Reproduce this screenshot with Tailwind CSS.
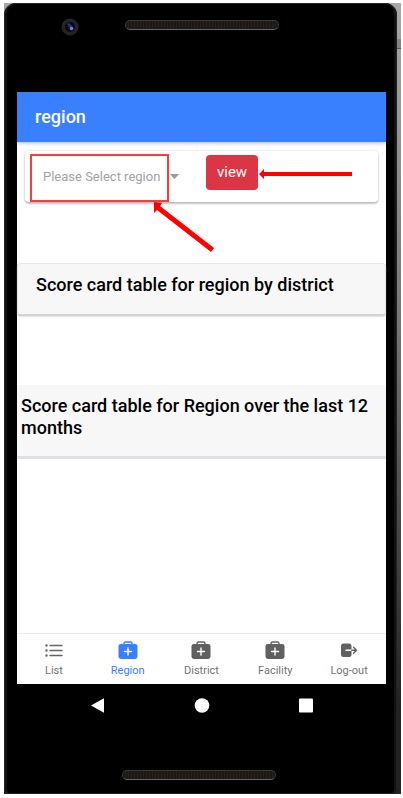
<!DOCTYPE html>
<html lang="en">
<head>
<meta charset="utf-8">
<meta name="viewport" content="width=device-width, initial-scale=1">
<title>region</title>
<script src="https://cdn.jsdelivr.net/npm/@tailwindcss/browser@4"></script>
</head>
<body class="flex min-h-screen flex-col bg-white pt-[3px] pr-0.5 pb-1 pl-1 font-['Roboto',sans-serif] text-black">
<div class="flex grow bg-linear-to-b from-[#a8a8a8] via-[#777] via-40% to-[#222] to-90%">
<div class="flex grow flex-col rounded-t-[12px] rounded-b-[6px] border-x-[3px] border-[#111] bg-black pr-2 pl-2.5 outline-1 -outline-offset-1 outline-[#222]">
  <div class="relative flex h-[89px] shrink-0 justify-center pt-[17px]">
    <svg class="absolute top-[15px] left-11" width="18" height="18" viewBox="0 0 18 18" aria-hidden="true">
      <circle cx="9" cy="9" r="8.5" fill="#242424"/><circle cx="9" cy="9" r="5" fill="#080814"/>
      <path d="M6 6l2-1 4 4-1 2-3-2z" fill="#243581"/><circle cx="10.5" cy="10.5" r="1.8" fill="#6b84e8"/>
    </svg>
    <div class="h-2.5 w-[154px] rounded-full border border-[#3a3a38] border-b-[#666] bg-[repeating-linear-gradient(90deg,#1c1814_0_2px,#26211c_2px_3px)]"></div>
  </div>

  <div class="relative flex grow flex-col bg-white">
    <header class="z-10 flex h-[50px] shrink-0 items-center bg-[#3880ff] px-[18px] shadow-[0_1px_4px_rgba(0,0,0,0.3)]">
      <h1 class="text-lg font-medium text-white">region</h1>
    </header>

    <main class="flex grow flex-col">
      <form class="relative mx-2 mt-[9px] flex h-[51px] items-start rounded bg-white pt-1 pl-[18px] shadow-[0_2px_2px_rgba(0,0,0,0.22),0_0_3px_rgba(0,0,0,0.16)]">
        <div class="relative mt-1 w-[136px]">
          <select id="region" aria-label="Region" class="h-9 w-full appearance-none bg-transparent text-[13px] text-[#a3a3a3]">
            <option>Please Select region</option>
          </select>
          <svg class="pointer-events-none absolute top-[15px] right-0" width="9" height="5" viewBox="0 0 9 5" fill="#999" aria-hidden="true"><path d="M0 0h9L4.500 5z"/></svg>
        </div>
        <button type="button" class="ml-[27px] h-[35px] rounded bg-[#dc3545] px-[11px] text-[15px] text-white">view</button>
        <div class="pointer-events-none absolute top-[3px] left-[5px] h-12 w-[139px] border-2 border-[#fa3c3c]"></div>
        <svg class="pointer-events-none absolute top-0 left-0 overflow-visible" width="353" height="100" viewBox="25 151 353 100" fill="#f00" aria-hidden="true">
          <path d="M259 174l5-5v3h88v4h-88v3z"/>
          <path d="M154 202l8 1-2 3 54 42-3 4-54-42-3 3z"/>
        </svg>
      </form>

      <section class="mt-[61px] h-[53px] rounded-sm border border-[#e6e6e6] border-b-2 border-b-[#d2d4d6] bg-[#f7f7f7] px-[18px] pt-2.5 shadow-[0_1px_1px_#dee2e6]">
        <h2 class="text-lg leading-[22px] font-medium">Score card table for region by district</h2>
      </section>

      <section class="mt-[69px] h-[74px] border-b-3 border-[#dee2e6] bg-[#f7f7f7] px-1 pt-2.5">
        <h2 class="text-lg leading-[22px] font-medium">Score card table for Region over the last 12 months</h2>
      </section>
    </main>

    <nav class="grid h-[51px] shrink-0 grid-cols-5 border-t border-[#ececec] bg-white text-[11px] leading-[14px] text-[#737373]">
      <a href="#list" class="flex flex-col items-center gap-[3px] pt-[7px]">
        <svg width="20" height="20" viewBox="0 0 20 20" fill="none" stroke="#666" aria-hidden="true"><path d="M6 4.500h12M6 9.500h12M6 14.500h12" stroke-width="1.400" stroke-linecap="round"/><path d="M2.500 4.500h.01M2.500 9.500h.01M2.500 14.500h.01" stroke-width="2.400" stroke-linecap="round"/></svg>
        List
      </a>
      <a href="#region" aria-current="page" class="flex flex-col items-center gap-[3px] pt-[7px] text-[#3880ff]">
        <svg width="20" height="20" viewBox="0 0 20 20" fill="#3880ff" aria-hidden="true"><path d="M6 3.800V2.500Q6 1 7.500 1h5Q14 1 14 2.500v1.300" fill="none" stroke="#3880ff" stroke-width="1.400"/><rect x=".5" y="3" width="19" height="15" rx="2.400"/><path d="M10 7v7M6.500 10.500h7" stroke="#fff" stroke-width="1.400" stroke-linecap="round"/></svg>
        Region
      </a>
      <a href="#district" class="flex flex-col items-center gap-[3px] pt-[7px]">
        <svg width="20" height="20" viewBox="0 0 20 20" fill="#606060" aria-hidden="true"><path d="M6 3.800V2.500Q6 1 7.500 1h5Q14 1 14 2.500v1.300" fill="none" stroke="#606060" stroke-width="1.400"/><rect x=".5" y="3" width="19" height="15" rx="2.400"/><path d="M10 7v7M6.500 10.500h7" stroke="#fff" stroke-width="1.400" stroke-linecap="round"/></svg>
        District
      </a>
      <a href="#facility" class="flex flex-col items-center gap-[3px] pt-[7px]">
        <svg width="20" height="20" viewBox="0 0 20 20" fill="#606060" aria-hidden="true"><path d="M6 3.800V2.500Q6 1 7.500 1h5Q14 1 14 2.500v1.300" fill="none" stroke="#606060" stroke-width="1.400"/><rect x=".5" y="3" width="19" height="15" rx="2.400"/><path d="M10 7v7M6.500 10.500h7" stroke="#fff" stroke-width="1.400" stroke-linecap="round"/></svg>
        Facility
      </a>
      <a href="#logout" class="flex flex-col items-center gap-[3px] pt-[7px]">
        <svg width="20" height="20" viewBox="0 0 20 20" fill="none" stroke-linecap="round" stroke-linejoin="round" aria-hidden="true"><rect x="2" y="2.500" width="10.500" height="13.500" rx="2.500" fill="#606060"/><path d="M7 9.300h6" stroke="#fff" stroke-width="1.500"/><path d="M12.800 9.300h4.500M14.500 6.300l3 3-3 3" stroke="#606060" stroke-width="1.400"/></svg>
        Log-out
      </a>
    </nav>
  </div>

  <div class="flex h-[110px] shrink-0 flex-col items-center justify-between pt-3.5 pb-3.5">
    <div class="flex w-full justify-center gap-[88px]">
      <button type="button" aria-label="Back"><svg width="16" height="16" viewBox="0 0 16 16" fill="#fff"><path d="M1 7.500L14 .3v14.500z"/></svg></button>
      <button type="button" aria-label="Home"><svg width="16" height="16" viewBox="0 0 16 16" fill="#fff"><circle cx="8" cy="7.500" r="7.300"/></svg></button>
      <button type="button" aria-label="Recent apps"><svg width="16" height="16" viewBox="0 0 16 16" fill="#fff"><rect x="1" y=".5" width="14" height="14" rx="1"/></svg></button>
    </div>
    <div class="mr-1.5 h-2.5 w-[154px] rounded-full border border-[#3a3a38] border-b-[#666] bg-[repeating-linear-gradient(90deg,#1c1814_0_2px,#26211c_2px_3px)]"></div>
  </div>
</div>
<div class="relative w-1 shrink-0"><div class="absolute top-9 right-0 h-2.5 w-full border-b border-[#555] bg-[#858585]"></div></div>
</div>
</body>
</html>
